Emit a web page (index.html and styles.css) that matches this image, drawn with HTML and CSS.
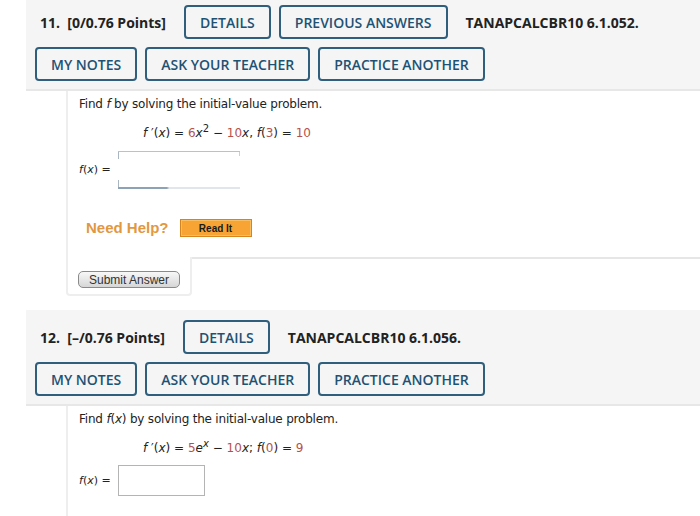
FILE: index.html
```html
<!DOCTYPE html>
<html lang="en">
<head>
<meta charset="utf-8">
<title>Questions</title>
<link rel="stylesheet" href="styles.css">
</head>
<body>
<div class="page">
  <section class="question">
    <header class="q-head">
      <div class="q-row">
        <span class="q-title">11.&nbsp; [0/0.76 Points]</span>
        <button class="q-btn">DETAILS</button>
        <button class="q-btn">PREVIOUS ANSWERS</button>
        <span class="q-code">TANAPCALCBR10 6.1.052.</span>
      </div>
      <div class="q-row">
        <button class="q-btn">MY NOTES</button>
        <button class="q-btn">ASK YOUR TEACHER</button>
        <button class="q-btn">PRACTICE ANOTHER</button>
      </div>
    </header>
    <div class="q-body q-body-first">
      <p class="prompt">Find <i>f</i> by solving the initial-value problem.</p>
      <p class="eq"><i>f</i> ′(<i>x</i>) = <span class="num">6</span><i>x</i><sup>2</sup> − <span class="num">10</span><i>x</i>, <i>f</i>(<span class="num">3</span>) = <span class="num">10</span></p>
      <div class="answer">
        <span class="lbl"><i>f</i>(<i>x</i>) =</span>
        <span class="field field-a"></span>
      </div>
      <div class="help">
        <span class="help-label">Need Help?</span>
        <button class="read-it">Read It</button>
      </div>
    </div>
    <div class="q-foot">
      <div class="submit-tab"><button class="submit">Submit Answer</button></div>
      <div class="foot-fill"></div>
    </div>
  </section>

  <section class="question">
    <header class="q-head">
      <div class="q-row">
        <span class="q-title">12.&nbsp; [–/0.76 Points]</span>
        <button class="q-btn">DETAILS</button>
        <span class="q-code">TANAPCALCBR10 6.1.056.</span>
      </div>
      <div class="q-row">
        <button class="q-btn">MY NOTES</button>
        <button class="q-btn">ASK YOUR TEACHER</button>
        <button class="q-btn">PRACTICE ANOTHER</button>
      </div>
    </header>
    <div class="q-body">
      <p class="prompt">Find <i>f</i>(<i>x</i>) by solving the initial-value problem.</p>
      <p class="eq"><i>f</i> ′(<i>x</i>) = <span class="num">5</span><i>e</i><sup><i>x</i></sup> − <span class="num">10</span><i>x</i>; <i>f</i>(<span class="num">0</span>) = <span class="num">9</span></p>
      <div class="answer answer-b">
        <span class="lbl"><i>f</i>(<i>x</i>) =</span>
        <span class="field field-b"></span>
      </div>
    </div>
  </section>
</div>
</body>
</html>
```

FILE: styles.css
```css
html, body {
  margin: 0;
  background: #ffffff;
}

.page {
  margin-top: -5px;
  padding-left: 26px;
}

.question + .question {
  margin-top: 14px;
}

.q-head {
  background: #f5f5f5;
  border-bottom: 2px solid #e7e7e7;
  padding: 10px 0 8px 9px;
  display: flex;
  flex-direction: column;
  gap: 8px;
  font-family: "Open Sans", "Noto Sans", sans-serif;
}

.q-row {
  display: flex;
  align-items: center;
  gap: 8px;
}

.q-title {
  font-size: 14px;
  font-weight: 700;
  color: #222;
  padding-left: 5px;
  margin-right: 10px;
  white-space: nowrap;
}

.q-code {
  font-size: 14px;
  font-weight: 700;
  color: #222;
  margin-left: 10px;
  white-space: nowrap;
}

.q-btn {
  height: 34px;
  box-sizing: border-box;
  padding: 0 14px;
  border: 2px solid #2f5f7d;
  border-radius: 4px;
  background: transparent;
  color: #1e5273;
  font-family: "Open Sans", "Noto Sans", sans-serif;
  font-size: 14px;
  font-weight: 600;
  white-space: nowrap;
}

.q-body {
  margin-left: 40px;
  border-left: 2px solid #eeeeee;
  padding: 5px 0 20px 11px;
  font-family: "DejaVu Sans", Verdana, sans-serif;
  font-size: 12px;
  line-height: 16px;
  color: #222;
}

.prompt {
  margin: 0;
  letter-spacing: -0.2px;
}

.eq {
  margin: 13px 0 0;
  padding-left: 64px;
}

.eq sup {
  font-size: 10px;
  line-height: 0;
}

.num {
  color: #b5514c;
}

.answer {
  display: flex;
  align-items: center;
  margin-top: 10px;
}

.answer-b {
  margin-top: 9px;
}

.lbl {
  width: 39px;
  font-size: 11px;
}

.field {
  display: block;
  box-sizing: border-box;
  background: #fff;
}

.field-a {
  width: 122px;
  height: 38px;
  background:
    linear-gradient(#b6c3cf, #b6c3cf) left top / 100% 1px no-repeat,
    linear-gradient(to right, #8ea2b5 0, #8ea2b5 40%, #e1e6ec 42%, #e1e6ec 100%) left bottom / 100% 2px no-repeat,
    linear-gradient(#a9b6c2, #a9b6c2) left top / 1px 8px no-repeat,
    linear-gradient(#a9b6c2, #a9b6c2) left bottom / 1px 9px no-repeat,
    linear-gradient(#c8d0d8, #c8d0d8) right top / 1px 5px no-repeat,
    #ffffff;
}

.field-b {
  width: 87px;
  height: 31px;
  border: 1px solid #b4b4b4;
}

.help {
  display: flex;
  align-items: center;
  gap: 11px;
  margin-top: 30px;
  padding-left: 7px;
}

.help-label {
  font-family: "Liberation Sans", Arial, sans-serif;
  font-size: 15px;
  font-weight: 700;
  color: #e2983f;
}

.read-it {
  width: 72px;
  height: 18px;
  padding: 0;
  border: 1px solid #d8841a;
  box-shadow: inset 0 0 0 1px #fbbe5f;
  background: #f8a435;
  color: #1a1a1a;
  font-family: "Liberation Sans", Arial, sans-serif;
  font-size: 10px;
  font-weight: 700;
}

.q-foot {
  display: flex;
  margin-left: 40px;
}

.submit-tab {
  border: 2px solid #eeeeee;
  border-top: none;
  border-radius: 0 0 4px 4px;
  padding: 14px 10px 6px 10px;
}

.foot-fill {
  flex: 1;
  border-top: 2px solid #e6e6e6;
}

.submit {
  display: block;
  width: 102px;
  height: 17px;
  padding: 0;
  border: 1px solid #8a8a8a;
  border-radius: 5px;
  background: linear-gradient(#f8f8f8, #d6d6d6);
  color: #333;
  font-family: "Liberation Sans", Arial, sans-serif;
  font-size: 12px;
}
```
